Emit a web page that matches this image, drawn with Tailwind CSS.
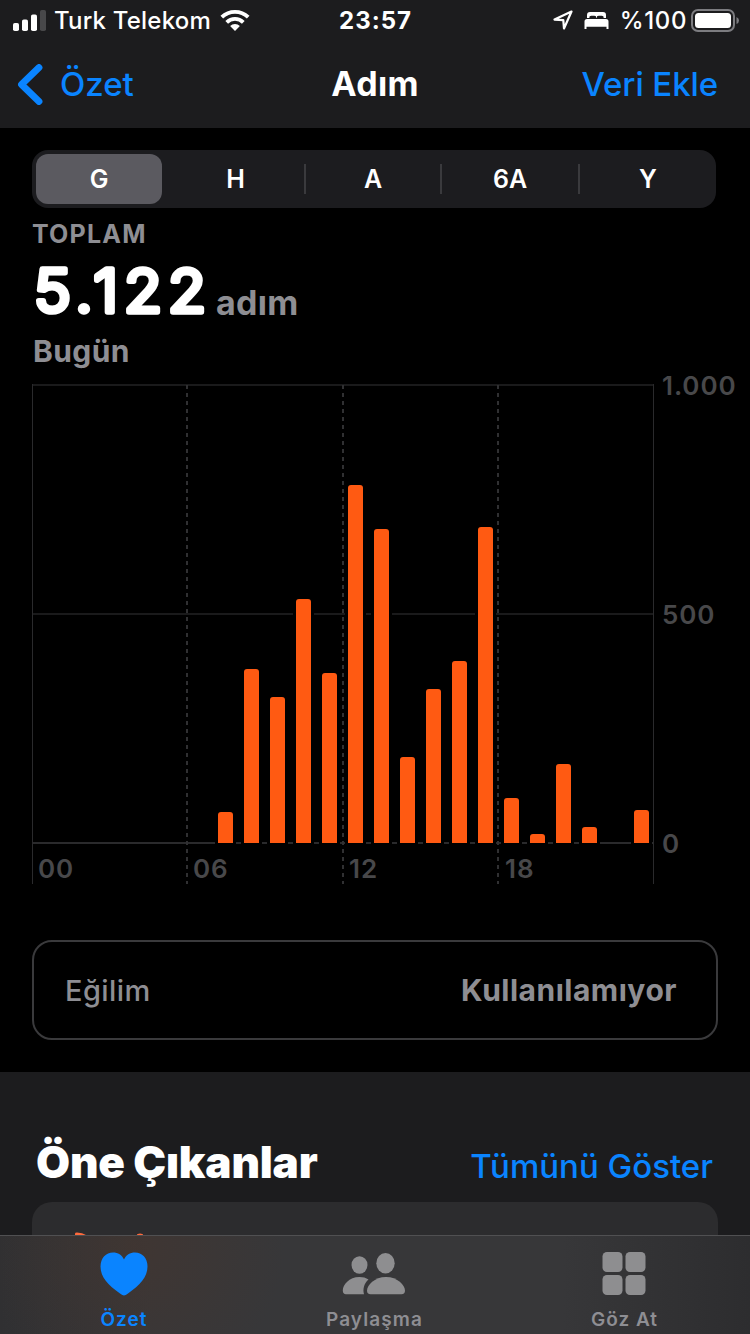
<!DOCTYPE html>
<html lang="tr">
<head>
  <meta charset="UTF-8" />
  <meta name="viewport" content="width=device-width, initial-scale=1.0"/>
  <title>Adım</title>
  <script src="https://cdn.jsdelivr.net/npm/@tailwindcss/browser@4"></script>
</head>
<body class="h-[1334px] overflow-hidden bg-black text-white font-['Inter','Liberation_Sans',sans-serif]">
  <!-- Header -->
  <header class="h-32 bg-[#1c1c1e]">
    <!-- Status bar -->
    <div class="grid grid-cols-[1fr_auto_1fr] h-10 items-center pl-[12px] pr-[10px] text-[24px] leading-none font-medium">
      <div class="flex items-center">
        <svg class="ml-px w-[33px] h-[21px]" viewBox="0 0 33 21" fill="#fff">
          <rect x="0" y="13" width="6" height="8" rx="1.8"/>
          <rect x="9" y="9.5" width="6" height="11.5" rx="1.8"/>
          <rect x="18" y="4.5" width="6" height="16.5" rx="1.8"/>
          <rect x="27" y="0" width="6" height="21" rx="1.8" fill="#48484a"/>
        </svg>
        <span class="ml-[8px] pt-px tracking-[0.2px]">Turk Telekom</span>
        <svg class="ml-[9px] w-[30px] h-[22px]" viewBox="0 0 30 22" fill="none" stroke="#fff" stroke-width="3.8">
          <path d="M1.8 8.2a18.8 18.8 0 0 1 26.400 0"/>
          <path d="M6.700 13.300a11.800 11.800 0 0 1 16.600 0"/>
          <path d="M15 22l-4.900-4.900a7 7 0 0 1 9.800 0z" fill="#fff" stroke="none"/>
        </svg>
      </div>
      <span class="pr-px pt-px font-bold tracking-[1px]">23:57</span>
      <div class="flex items-center justify-end">
        <svg class="w-[20px] h-[20px]" viewBox="0 0 20 20" fill="none" stroke="#fff" stroke-width="2.200" stroke-linejoin="round">
          <path d="M18.500 1.500L1.500 9.600l8.800.600.700 8.300z"/>
        </svg>
        <svg class="ml-[11px] w-[25px] h-[17px]" viewBox="0 0 24 17" fill="#fff">
          <path d="M2.500 6V3a3 3 0 0 1 3-3h13a3 3 0 0 1 3 3v3h-2.300a2 2 0 0 0-2-2.200h-3a2 2 0 0 0-2 2.200h-.4a2 2 0 0 0-2-2.200h-3a2 2 0 0 0-2 2.200z"/>
          <path d="M0 17V9.500a2.500 2.500 0 0 1 2.500-2.500h19A2.500 2.500 0 0 1 24 9.500V17h-2v-2.200H2V17z"/>
        </svg>
        <span class="ml-[11px] pt-px tracking-[0.6px]">%100</span>
        <svg class="ml-[4px] w-[49px] h-[23px]" viewBox="0 0 49 23">
          <rect x="1" y="1" width="42" height="21" rx="6" fill="none" stroke="#7c7c80" stroke-width="2"/>
          <rect x="4" y="4" width="36" height="15" rx="3.500" fill="#fff"/>
          <path d="M45.500 8q2.500 1 2.500 3.500t-2.500 3.500z" fill="#7c7c80"/>
        </svg>
      </div>
    </div>
    <!-- Navigation -->
    <nav class="grid grid-cols-[1fr_auto_1fr] h-[88px] items-center px-[17px] text-[33px] leading-none">
      <a href="#" class="flex items-center text-[#0a84ff]">
        <svg class="w-[26px] h-[41px]" viewBox="0 0 26 41" fill="none" stroke="currentColor" stroke-width="6.800" stroke-linecap="round" stroke-linejoin="round">
          <path d="M22 3.500L4.500 20.500l17.500 17"/>
        </svg>
        <span class="ml-[17px] font-medium">Özet</span>
      </a>
      <h1 class="text-[34px] leading-none font-bold tracking-[0.3px]">Adım</h1>
      <a href="#" class="mr-[15px] justify-self-end font-medium tracking-[-0.1px] text-[#0a84ff]">Veri Ekle</a>
    </nav>
  </header>

  <!-- Step count -->
  <main class="h-[944px] pt-[22px] px-8">
    <div class="grid grid-cols-[131px_137px_136px_138px_134px] w-[684px] h-[58px] p-1 rounded-[16px] bg-[#1c1c1f] text-[25px] leading-none font-semibold">
      <button class="w-[126px] rounded-[12px] bg-[#5b5a60]">G</button>
      <button>H</button>
      <button class="flex items-center"><i class="w-0.5 h-[30px] bg-[#3a3a3d]"></i><span class="flex-1">A</span></button>
      <button class="flex items-center"><i class="w-0.5 h-[30px] bg-[#3a3a3d]"></i><span class="flex-1">6A</span></button>
      <button class="flex items-center"><i class="w-0.5 h-[30px] bg-[#3a3a3d]"></i><span class="flex-1 pl-1">Y</span></button>
    </div>

    <section class="h-[176px] pt-[14px] text-[#8e8e93] font-bold">
      <p class="text-[25px] leading-[25px] tracking-[1.200px]">TOPLAM</p>
      <div class="flex items-end mt-[15px] h-[66px]">
        <svg class="w-[184px] h-[66px] overflow-visible" viewBox="0 0 184 66">
          <text transform="scale(1.050 1)" x="2" y="49.500" font-size="59" font-weight="300" letter-spacing="5.800" fill="#fff" stroke="#fff" stroke-width="5.600" stroke-linejoin="round">5.122</text>
        </svg>
        <span class="text-[34px] leading-[50px] tracking-[0.3px]">adım</span>
      </div>
      <p class="mt-[8px] pl-px text-[30px] leading-[30px] tracking-[0.4px]">Bugün</p>
    </section>

    <!-- Hourly chart -->
    <div class="flex h-[500px] text-[26px] leading-none font-semibold tracking-[0.9px] text-[#48484a]">
      <div class="relative shrink-0 w-[622px]">
        <svg class="absolute inset-0 w-[622px] h-[500px]" viewBox="0 0 622 500" fill="none" stroke="#2a2a2c">
          <path d="M0 1h622M0 230h622" stroke="#1a1a1b" stroke-width="2"/>
          <path d="M0 459h622" stroke-width="2"/>
          <path d="M.500 0v500M621.500 0v500"/>
          <path d="M155 1v499M311 1v499M466 1v499" stroke="#303032" stroke-width="2" stroke-dasharray="4 4"/>
        </svg>
        <div id="bars" class="relative grid grid-cols-24 items-end h-[459px] -ml-px"></div>
        <div class="grid grid-cols-[155px_156px_156px_auto] pt-[13px] pl-[6px]">
          <span>00</span><span>06</span><span>12</span><span>18</span>
        </div>
      </div>
      <div class="flex flex-col shrink-0 justify-between w-[80px] h-[484px] -mt-[11px] pl-2">
        <span>1.000</span><span>500</span><span>0</span>
      </div>
    </div>

    <div class="flex items-center justify-between w-[686px] h-[100px] mt-14 pl-[31px] pr-[39px] rounded-[20px] border-2 border-[#3a3a3c] text-[30px] leading-none text-[#8e8e93]">
      <span class="text-[29px] leading-none font-medium tracking-[0.4px]">Eğilim</span>
      <span class="font-bold tracking-[0.5px]">Kullanılamıyor</span>
    </div>
  </main>

  <!-- Highlights -->
  <section class="h-[262px] px-8 bg-[#1c1c1e]">
    <div class="flex items-baseline justify-between h-[130px] pt-[68px] pl-[4px] pr-[5px]">
      <h2 class="text-[44px] leading-none font-black tracking-[-0.2px]">Öne Çıkanlar</h2>
      <a href="#" class="text-[33px] leading-none font-medium text-[#0a84ff]">Tümünü Göster</a>
    </div>
    <div class="w-[686px] h-[132px] rounded-t-[20px] bg-[#2c2c2e]">
      <svg class="w-[160px] h-[60px]" viewBox="0 0 160 60" fill="#ff6a3c">
        <path d="M43 33V31.500Q43 30.500 45 30.500q5 0 10 3z"/>
        <path d="M105 33q0-1.500 3-1.500t3 1.500z"/>
      </svg>
    </div>
  </section>

  <!-- Tab bar -->
  <footer class="fixed bottom-0 inset-x-0 grid grid-cols-3 h-[99px] border-t border-[#505052] bg-[radial-gradient(circle_at_135px_10px,#45352e99,transparent_150px),linear-gradient(to_right,#303032,#373739_20%,#373739_75%,#2d2d2f)] text-[19px] leading-none font-semibold tracking-[1px] text-[#8e8e93]">
    <a href="#" class="flex flex-col items-center pt-[16px] pr-[2px] text-[#0a84ff]">
      <svg class="w-[48px] h-[44px]" viewBox="0 0 48 44" fill="currentColor">
        <path d="M24 43.500Q22.500 43.500 20 41.500C8 33 .5 25 .5 14.500.500 6 6 .5 13 .5c5 0 9 2.500 11 7 2-4.500 6-7 11-7 7 0 12.500 5.500 12.500 14C47.500 25 40 33 28 41.500Q25.500 43.500 24 43.500z"/>
      </svg>
      <span class="mt-[14px]">Özet</span>
    </a>
    <a href="#" class="flex flex-col items-center pt-[17px] pr-[2px]">
      <svg class="w-[64px] h-[44px]" viewBox="0 0 64 44" fill="#8e8e90">
        <ellipse cx="17.500" cy="12" rx="8" ry="8.700"/>
        <ellipse cx="43.500" cy="10.300" rx="9.200" ry="10.200"/>
        <path d="M26.500 26.500C24 24.800 21 24 17.500 24 7 24 .8 32 .8 37.500.8 40 2 41.200 4 41.200h18c-1.500-4.700 0-11 4.500-14.700z"/>
        <path d="M44 24c-11.500 0-19 8.200-19 13.700 0 2.300 1.200 3.500 3.500 3.500h31c2.300 0 3.500-1.200 3.500-3.500C63 32.200 55.500 24 44 24z"/>
      </svg>
      <span class="mt-[13px] ml-px tracking-[1.1px]">Paylaşma</span>
    </a>
    <a href="#" class="flex flex-col items-center pt-[16px] pr-[2px]">
      <svg class="w-[44px] h-[44px]" viewBox="0 0 44 44" fill="#8e8e90">
        <rect x="0.500" y="0" width="20" height="20" rx="4.500"/>
        <rect x="23.500" y="0" width="20" height="20" rx="4.500"/>
        <rect x="0.500" y="23" width="20" height="20" rx="4.500"/>
        <rect x="23.500" y="23" width="20" height="20" rx="4.500"/>
      </svg>
      <span class="mt-[14px] ml-px">Göz At</span>
    </a>
  </footer>

  <script>
    // Bar height in px for each hour, 458px = 1.000 steps
    const hours = [0, 0, 0, 0, 0, 0, 0, 31, 174, 146, 244, 170, 358, 314, 86, 154, 182, 316, 45, 9, 79, 16, 0, 33];
    const bars = document.getElementById('bars');

    hours.forEach(height => {
      const bar = document.createElement('div');
      bar.className = height ? 'w-[15px] justify-self-center rounded-t-[3px] bg-[#ff5a12] shadow-[0_0_0_3px_#000]' : '';
      bar.style.height = `${height}px`;
      bars.appendChild(bar);
    });
  </script>
</body>
</html>
